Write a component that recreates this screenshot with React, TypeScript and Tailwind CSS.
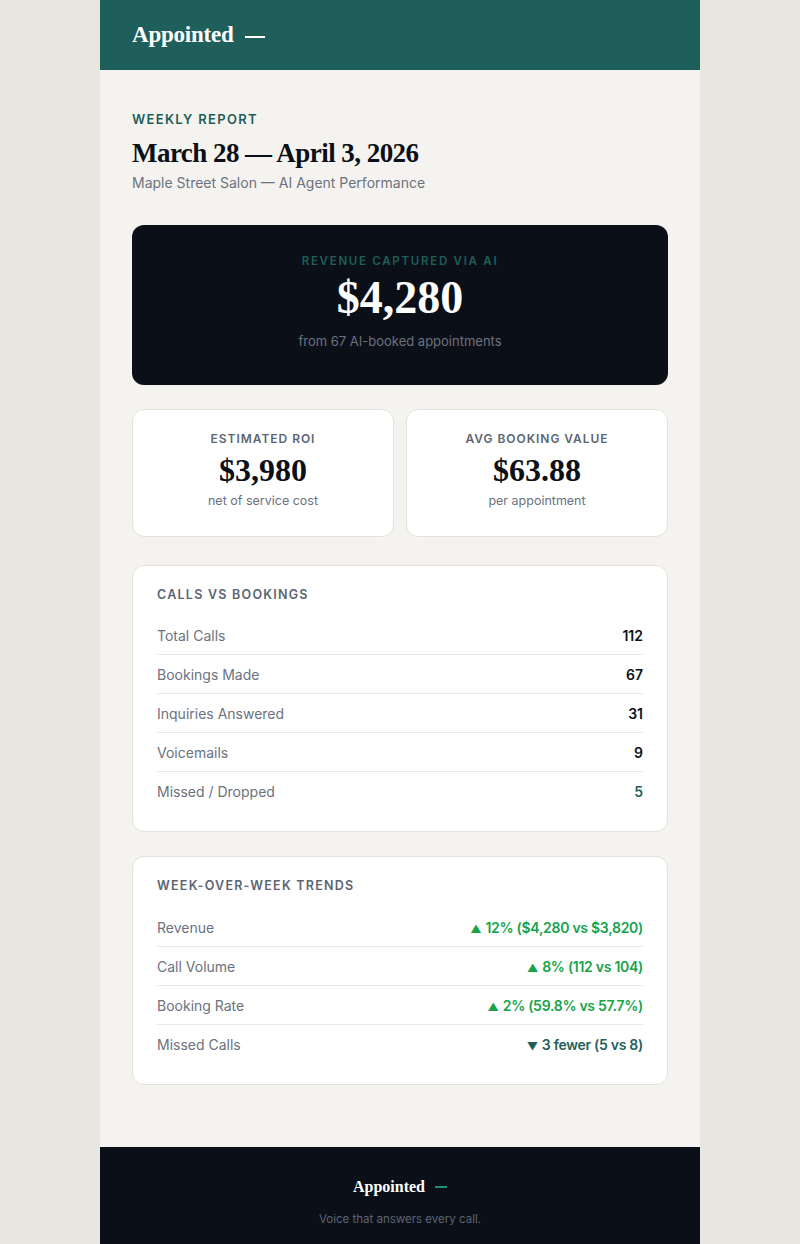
const serif = { fontFamily: '"Liberation Serif","DejaVu Serif",serif' };
export default function App() {
  const calls = [["Total Calls","112","text-[#0b0f17]"],["Bookings Made","67","text-[#0b0f17]"],["Inquiries Answered","31","text-[#0b0f17]"],["Voicemails","9","text-[#0b0f17]"],["Missed / Dropped","5","text-[#1f5f5b]"]];
  const trends = [["Revenue","▲","12% ($4,280 vs $3,820)","text-[#16a34a]"],["Call Volume","▲","8% (112 vs 104)","text-[#16a34a]"],["Booking Rate","▲","2% (59.8% vs 57.7%)","text-[#16a34a]"],["Missed Calls","▼","3 fewer (5 vs 8)","text-[#1f5f5b]"]];
  const Card = ({ title, rows }: { title: string; rows: string[][] }) => (
    <div className="bg-white border border-[#e5e2dc] rounded-xl px-6 pt-5 pb-5">
      <div className="text-[12.5px] font-semibold tracking-[0.1em] text-[#5b6573] mb-3">{title}</div>
      {rows.map((r, i) => (
        <div key={i} className={`flex justify-between items-center h-[39px] text-[14px] ${i < rows.length - 1 ? "border-b border-[#ece9e4]" : ""}`}>
          <span className="text-[#6b7280]">{r[0]}</span>
          {r.length === 3 ? (
            <span className={`font-semibold ${r[2]}`}>{r[1]}</span>
          ) : (
            <span className={`font-semibold tracking-[-0.02em] ${r[3]}`}><span className="text-[11px] mr-1">{r[1]}</span>{r[2]}</span>
          )}
        </div>
      ))}
    </div>
  );
  return (
    <div className="min-h-[1244px] bg-[#e8e6e1] flex justify-center" style={{ fontFamily: 'Inter,"Noto Sans",sans-serif' }}>
      <div className="w-[600px] bg-[#f5f3ef] flex flex-col">
        <div className="h-[70px] bg-[#1f5f5b] flex items-center px-8 gap-3">
          <span className="text-white text-[23px] font-bold tracking-[-0.01em]" style={serif}>Appointed</span>
          <span className="w-5 h-[2px] bg-white mt-1"></span>
        </div>
        <div className="px-8 pt-10 pb-12 flex flex-col">
          <div className="text-[13px] font-semibold tracking-[0.1em] text-[#1f5f5b]">WEEKLY REPORT</div>
          <div className="text-[27px] leading-[34px] font-bold text-[#0b0f17] mt-1.5 tracking-[-0.02em]" style={serif}>March 28 — April 3, 2026</div>
          <div className="text-[14px] text-[#6b7280] mt-0.5">Maple Street Salon — AI Agent Performance</div>
          <div className="mt-8 h-[160px] bg-[#0b0f17] rounded-xl flex flex-col items-center pt-7">
            <div className="text-[11.5px] font-semibold tracking-[0.15em] text-[#1f5f5b]">REVENUE CAPTURED VIA AI</div>
            <div className="text-[46px] font-bold text-white mt-0.5 leading-[52px]" style={serif}>$4,280</div>
            <div className="text-[13px] text-[#6b7280] mt-2">from 67 AI-booked appointments</div>
          </div>
          <div className="mt-6 grid grid-cols-2 gap-3">
            {[["ESTIMATED ROI","$3,980","net of service cost"],["AVG BOOKING VALUE","$63.88","per appointment"]].map(c => (
              <div key={c[0]} className="bg-white border border-[#e5e2dc] rounded-xl h-[128px] flex flex-col items-center pt-5">
                <div className="text-[12px] font-semibold tracking-[0.08em] text-[#5b6573]">{c[0]}</div>
                <div className="text-[32px] font-bold text-[#0b0f17] leading-[40px] mt-0.5" style={serif}>{c[1]}</div>
                <div className="text-[12.5px] text-[#6b7280] mt-0.5">{c[2]}</div>
              </div>
            ))}
          </div>
          <div className="mt-7"><Card title="CALLS VS BOOKINGS" rows={calls} /></div>
          <div className="mt-6"><Card title="WEEK-OVER-WEEK TRENDS" rows={trends} /></div>
        </div>
        <div className="bg-[#0b0f17] h-[97px] flex flex-col items-center pt-7 mt-auto">
          <div className="flex items-center gap-2.5">
            <span className="text-white text-[16px] font-bold" style={serif}>Appointed</span>
            <span className="w-3 h-[1.5px] bg-[#1f8f7b]"></span>
          </div>
          <div className="text-[11.5px] text-[#5b6573] mt-3">Voice that answers every call.</div>
        </div>
      </div>
    </div>
  );
}
